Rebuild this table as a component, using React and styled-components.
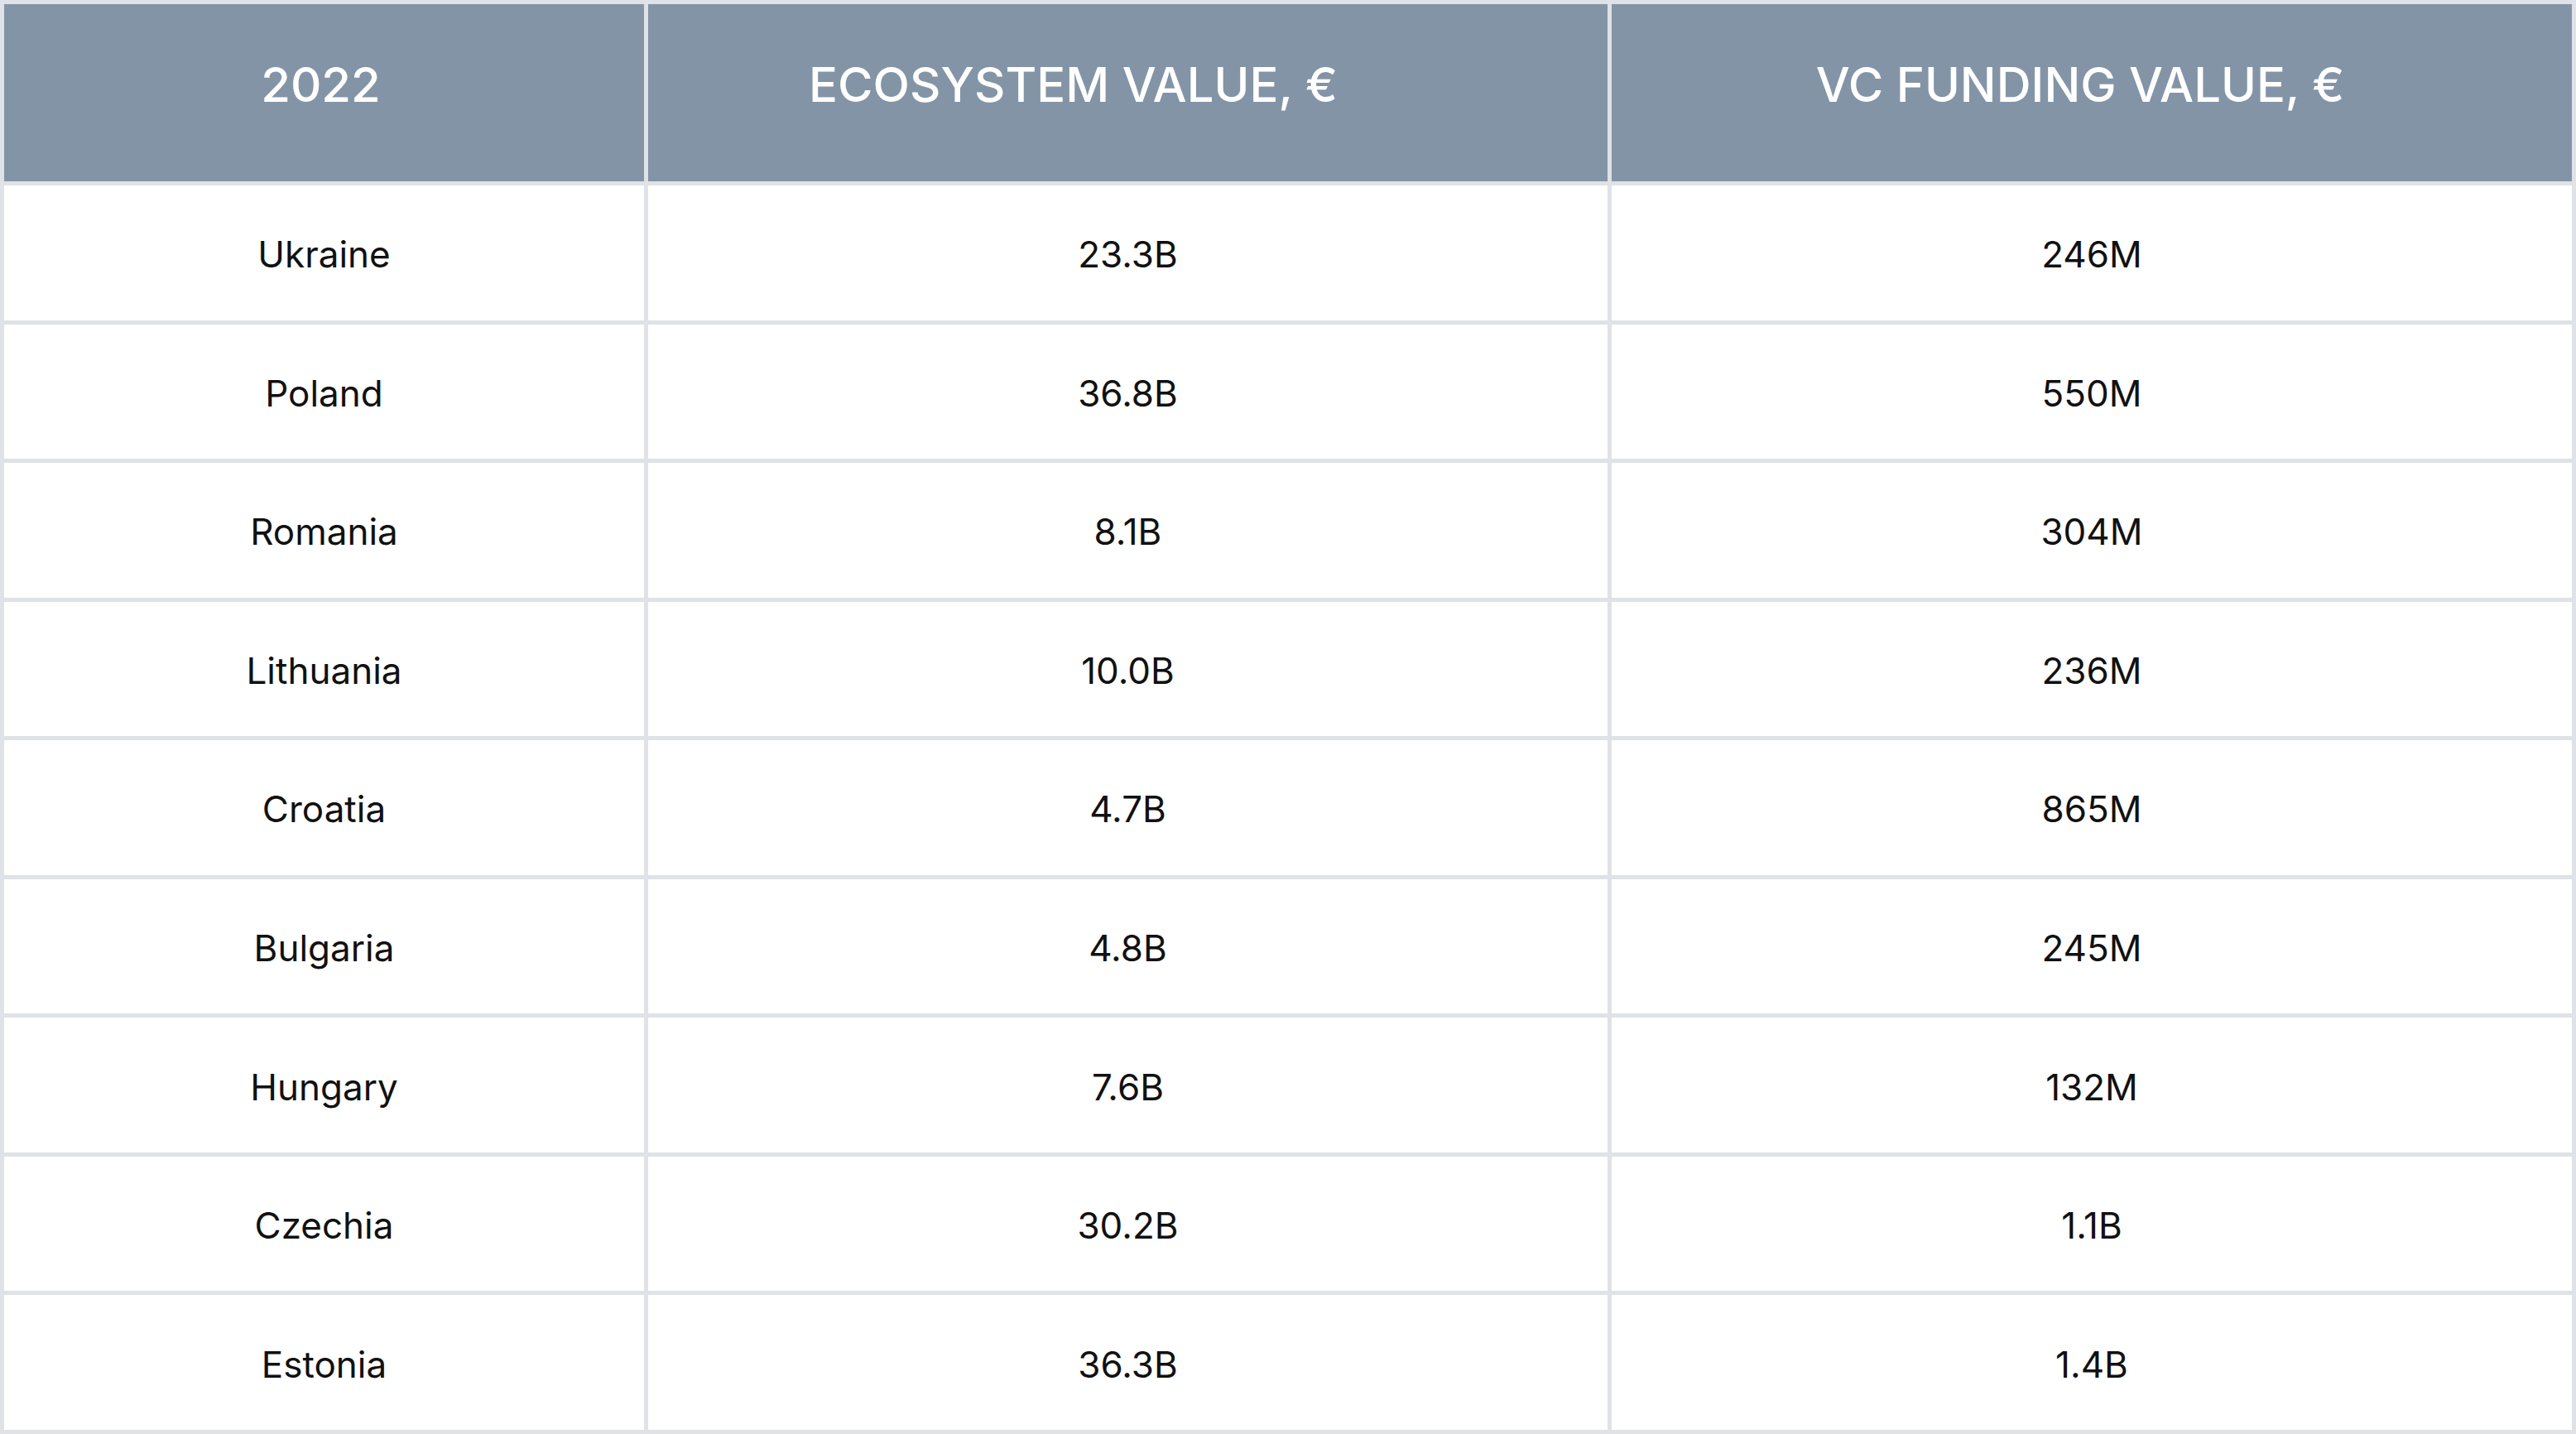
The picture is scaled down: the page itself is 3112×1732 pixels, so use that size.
import React from 'react'
import styled, { createGlobalStyle } from 'styled-components';

const rows = [
  ['Ukraine', '23.3B', '246M'],
  ['Poland', '36.8B', '550M'],
  ['Romania', '8.1B', '304M'],
  ['Lithuania', '10.0B', '236M'],
  ['Croatia', '4.7B', '865M'],
  ['Bulgaria', '4.8B', '245M'],
  ['Hungary', '7.6B', '132M'],
  ['Czechia', '30.2B', '1.1B'],
  ['Estonia', '36.3B', '1.4B'],
];

// shift = how far the title sits left of the column centre
const headers = [
  { label: '2022', shift: 8 },
  { label: 'ECOSYSTEM VALUE, €', shift: 132 },
  { label: 'VC FUNDING VALUE, €', shift: 28 },
];

const App = () => {
  return (
    <>
      <GlobalStyle />
      <Table>
        {headers.map((h) => (
          <HeadCell key={h.label} $shift={h.shift}>{h.label}</HeadCell>
        ))}
        {rows.map((row) =>
          row.map((value, i) => <Cell key={row[0] + i}>{value}</Cell>)
        )}
      </Table>
    </>
  )
}

const GlobalStyle = createGlobalStyle`
  * { box-sizing: border-box; }
  body {
    margin: 0;
    background: #fff;
    font-family: Inter, "Liberation Sans", sans-serif;
  }
`;

const Table = styled.div`
  display: grid;
  grid-template-columns: 773fr 1159fr 1160fr;
  grid-template-rows: 214px repeat(9, 1fr);
  gap: 5px;
  padding: 5px;
  width: 3112px;
  height: 1732px;
  background: #dfe2e6;
`;

const HeadCell = styled.div`
  display: flex;
  align-items: center;
  justify-content: center;
  padding-bottom: 20px;
  padding-right: ${(p) => p.$shift}px;
  background: #8394a6;
  color: #fff;
  font-size: 58px;
  font-weight: 500;
`;

const Cell = styled.div`
  display: flex;
  align-items: center;
  justify-content: center;
  padding-top: 4px;
  background: #fff;
  color: #111;
  font-size: 44px;
  font-weight: 400;
`;

export default App
